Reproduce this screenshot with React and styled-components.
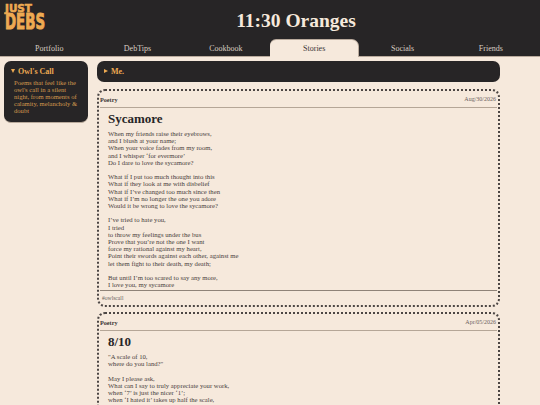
import React from 'react'
import styled, { createGlobalStyle } from 'styled-components'

const dark = '#272526'
const cream = '#f6e9dc'
const orange = '#eeaa52'

const GlobalStyle = createGlobalStyle`
    html, body {
        margin: 0;
        padding: 0;
        height: 405px;
        overflow: hidden;
        background-color: ${cream};
        font-family: "Liberation Serif", serif;
    }
`

// top part
const Header = styled.header`
    background-color: ${dark};
    height: 56px;
    border-bottom: 1px solid #b9aa9c;
    display: flex;
    flex-direction: column;
`
const TitleRow = styled.div`
    height: 40px;
    display: flex;
    align-items: center;
`
const Logo = styled.svg`
    width: 48px;
    height: 40px;
    margin-left: 4px;
    flex-shrink: 0;
    fill: ${orange};
    stroke: ${orange};
    font-family: "DejaVu Sans", sans-serif;
    font-weight: 700;
`
const Title = styled.h1`
    flex: 1;
    margin: 2px 0 0;
    text-align: center;
    color: ${cream};
    font-size: 19.5px;
    font-weight: 700;
`
const Nav = styled.nav`
    height: 16px;
    padding: 0 5px;
    display: grid;
    grid-template-columns: repeat(6, 1fr);
`
const Tab = styled.div`
    display: flex;
    align-items: center;
    justify-content: center;
    font-size: 8px;
    color: ${(props) => (props.$active ? '#3a3534' : '#d8cdc2')};
    background-color: ${(props) => (props.$active ? cream : 'transparent')};
    box-shadow: ${(props) => (props.$active ? '0 -1px 0 #b9aa9c, 1px 0 0 #b9aa9c' : 'none')};
    border-radius: 6px 6px 0 0;
    margin-bottom: ${(props) => (props.$active ? '-1px' : '0')};
`

// body
const Main = styled.main`
    display: grid;
    grid-template-columns: 84px 403px;
    column-gap: 9px;
    padding: 3.5px 0 0 4px;
    align-items: start;
`
const SideBox = styled.aside`
    background-color: ${dark};
    border-radius: 7px;
    border-bottom: 1px solid #b9aa9c;
    height: 62px;
    box-sizing: border-box;
    padding: 5px 7px;
    color: ${orange};
`
const BoxTitle = styled.div`
    font-size: 8px;
    font-weight: 700;
    line-height: 11px;
    display: flex;
    align-items: center;
    gap: 3px;
`
const Arrow = styled.span`
    width: 0;
    height: 0;
    ${(props) => props.$open
        ? `border-left: 2.5px solid transparent;
           border-right: 2.5px solid transparent;
           border-top: 4px solid ${orange};`
        : `border-top: 2.5px solid transparent;
           border-bottom: 2.5px solid transparent;
           border-left: 4px solid ${orange};`}
`
const SideText = styled.p`
    margin: 2px 0 0 3px;
    font-size: 6.6px;
    line-height: 7.2px;
    color: #d39a4e;
`
const Column = styled.div`
    display: flex;
    flex-direction: column;
    min-width: 0;
`
const MeBar = styled.div`
    background-color: ${dark};
    border-radius: 7px;
    height: 21.5px;
    padding: 0 7px;
    display: flex;
    align-items: center;
    color: ${orange};
    margin-bottom: 7px;
`
const Card = styled.article`
    border: 2px dotted #4c4644;
    border-radius: 8px;
    padding: 0 1px;
    margin-bottom: 5px;
    box-sizing: border-box;
    height: ${(props) => props.$height};
    display: flex;
    flex-direction: column;
    overflow: hidden;
`
const CardHead = styled.div`
    height: 16px;
    display: flex;
    align-items: center;
    justify-content: space-between;
    border-bottom: 1px solid #b5a697;
    flex-shrink: 0;
`
const Category = styled.span`
    font-size: 6.2px;
    font-weight: 700;
    color: #3a3635;
`
const DateText = styled.span`
    font-size: 6px;
    color: #6b6360;
    margin-right: 1px;
`
const CardBody = styled.div`
    padding: 0 8px;
    flex: 1;
    min-height: 0;
`
const PoemTitle = styled.h2`
    margin: 2px 0 2px;
    font-size: 13px;
    line-height: 18px;
    font-weight: 700;
    color: ${dark};
`
const Stanza = styled.p`
    margin: 0 0 7.2px;
    font-size: 6.7px;
    line-height: 7.2px;
    color: #4a4240;
    white-space: pre-line;
    &:last-child {
        margin-bottom: 0;
    }
`
const Tags = styled.div`
    border-top: 1px solid #8f8378;
    height: 14px;
    padding-left: 2px;
    flex-shrink: 0;
    display: flex;
    align-items: center;
    font-size: 5.6px;
    color: #6b6360;
`

const sycamore = [
    `When my friends raise their eyebrows,
and I blush at your name;
When your voice fades from my room,
and I whisper ‘for evermore’
Do I dare to love the sycamore?`,
    `What if I put too much thought into this
What if they look at me with disbelief
What if I’ve changed too much since then
What if I’m no longer the one you adore
Would it be wrong to love the sycamore?`,
    `I’ve tried to hate you,
I tried
to throw my feelings under the bus
Prove that you’re not the one I want
force my rational against my heart,
Point their swords against each other, against me
let them fight to their death, my death;`,
    `But until I’m too scared to say any more,
I love you, my sycamore`,
]

const eightTen = [
    `"A scale of 10,
where do you land?"`,
    `May I please ask,
What can I say to truly appreciate your work,
when ‘7’ is just the nicer ‘1’;
when ‘I hated it’ takes up half the scale,`,
]

const tabs = ['Portfolio', 'DebTips', 'Cookbook', 'Stories', 'Socials', 'Friends']

const App = () => {
    return (
        <>
            <GlobalStyle />
            <Header>
                <TitleRow>
                    <Logo viewBox="0 0 48 40">
                        <text x="1" y="11.5" fontSize="10.5" strokeWidth="0.6" textLength="27" lengthAdjust="spacingAndGlyphs">JUST</text>
                        <text x="1" y="29" fontSize="21" strokeWidth="1" textLength="40" lengthAdjust="spacingAndGlyphs">DEBS</text>
                    </Logo>
                    <Title>11:30 Oranges</Title>
                </TitleRow>
                <Nav>
                    {tabs.map((tab) => (
                        <Tab key={tab} $active={tab === 'Stories'}>{tab}</Tab>
                    ))}
                </Nav>
            </Header>
            <Main>
                <SideBox>
                    <BoxTitle><Arrow $open />Owl's Call</BoxTitle>
                    <SideText>Poems that feel like the owl's call in a silent night, from moments of calamity, melancholy &amp; doubt</SideText>
                </SideBox>
                <Column>
                    <MeBar>
                        <BoxTitle><Arrow />Me.</BoxTitle>
                    </MeBar>
                    <Card $height="218px">
                        <CardHead>
                            <Category>Poetry</Category>
                            <DateText>Aug/30/2026</DateText>
                        </CardHead>
                        <CardBody>
                            <PoemTitle>Sycamore</PoemTitle>
                            {sycamore.map((s, i) => <Stanza key={i}>{s}</Stanza>)}
                        </CardBody>
                        <Tags>#owlscall</Tags>
                    </Card>
                    <Card $height="200px">
                        <CardHead>
                            <Category>Poetry</Category>
                            <DateText>Apr/05/2026</DateText>
                        </CardHead>
                        <CardBody>
                            <PoemTitle>8/10</PoemTitle>
                            {eightTen.map((s, i) => <Stanza key={i}>{s}</Stanza>)}
                        </CardBody>
                    </Card>
                </Column>
            </Main>
        </>
    )
}

export default App
